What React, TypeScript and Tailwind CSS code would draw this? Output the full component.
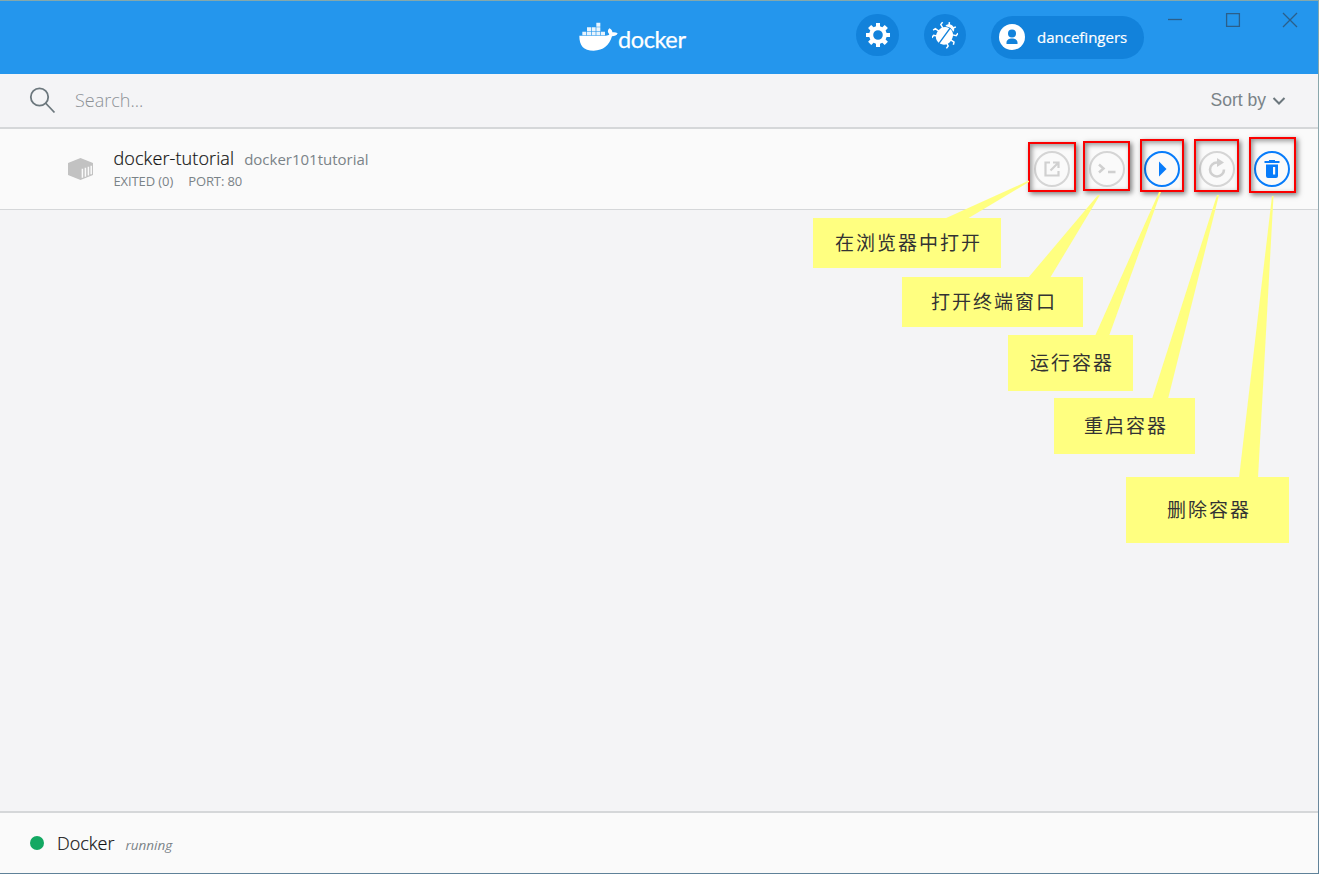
import React from "react";

const FONT = "font-['Open_Sans','Noto_Sans_CJK_SC',sans-serif]";

interface Callout {
  label: string;
  box: string;
  tail: string;
}

const callouts: Callout[] = [
  { label: "在浏览器中打开", box: "left-[813px] top-[218px] w-[188px] h-[50px] pl-[22px]", tail: "944,219 967,219 1029,182 1029,180.5" },
  { label: "打开终端窗口", box: "left-[902px] top-[277px] w-[181px] h-[50px] pl-[29px]", tail: "1028,278 1050,278 1100,195 1098,195" },
  { label: "运行容器", box: "left-[1008px] top-[335px] w-[125px] h-[56px] pl-[22px]", tail: "1095,336 1109,336 1161,192 1159,192" },
  { label: "重启容器", box: "left-[1054px] top-[398px] w-[141px] h-[56px] pl-[30px]", tail: "1152,399 1168,399 1219,195 1217,195" },
  { label: "删除容器", box: "left-[1126px] top-[477px] w-[163px] h-[66px] pl-[41px]", tail: "1239,478 1258,478 1273.5,196 1272,196" },
];

const frames = [
  "left-[1028px] top-[142px] w-[48px] h-[50px]",
  "left-[1083px] top-[141px] w-[47px] h-[50px]",
  "left-[1140px] top-[139px] w-[44px] h-[53px]",
  "left-[1194px] top-[139px] w-[45px] h-[53px]",
  "left-[1249px] top-[137px] w-[47px] h-[56px]",
];

function Whale() {
  return (
    <svg width="39" height="29" viewBox="56 67 117 87" fill="white">
      <g opacity=".9">
        <path d="M66 96h12v11H66zM80 96h12v11H80zM94 96h12v11H94zM108 96h12v11h-12zM122 96h12v11h-12z" />
        <path d="M80 82.5h12v12H80zM94 82.5h12v12H94zM108 82.5h12v12h-12zM108 69h12v12h-12z" />
      </g>
      <path d="M57 108H136c6 0 9-1 11-4-6-6-6-12 0-18 6 3 9 7 9 12 6-1 12 0 16 3-3 7-9 9-17 9-8 27-26 43-55 43-31 0-43-16-43-45z" />
    </svg>
  );
}

function Gear() {
  return (
    <svg width="24" height="24" viewBox="0 0 24 24" fill="white">
      <path
        fillRule="evenodd"
        d="M10 0h4v3.2l2.3 1 2.4-2.3 3.2 3.2-2.3 2.4 1 2.5H24v4h-3.4l-1 2.4 2.3 2.4-3.2 3.2-2.4-2.3-2.3 1V24h-4v-3.3l-2.4-1-2.4 2.3-3.1-3.2 2.2-2.4-1-2.4H0v-4h3.3l1-2.5-2.2-2.4 3.1-3.2 2.4 2.3 2.4-1zM12 7.2a4.8 4.8 0 1 0 0 9.6 4.8 4.8 0 0 0 0-9.6z"
      />
    </svg>
  );
}

function Bug() {
  return (
    <svg width="26" height="28" viewBox="0 0 26 28" fill="none" stroke="white" strokeWidth="1.5">
      <g transform="rotate(36 13 14)">
        <path d="M12.4 6v18C7.5 23.5 5 19.5 5 15s2.5-8.5 7.4-9zM13.8 6v18c4.9-.5 7.4-4.5 7.4-9s-2.5-8.5-7.4-9z" fill="white" stroke="none" />
        <path d="M8 6.5a5 4.5 0 0 1 10 0l-5-1.5z" fill="white" stroke="none" />
        <path d="M10.5 3.5 9 1M15.5 3.5 17 1M7 9.5 3.5 8V5M6 14.5H1.5L.5 17M7 19.5 4 21v3M19 9.5 22.5 8V5M20 14.5h4.5l1 2.5M19 19.5l3 1.5v3" />
      </g>
    </svg>
  );
}

function Container() {
  return (
    <svg width="26" height="24" viewBox="0 0 26 24">
      <path d="M12.5 1 25 6v12l-12.5 5L0 18V6z" fill="#c2c2c2" />
      <path d="M14.4 11.8v9M17.4 10.8v9M20.4 9.7v8.8M23.2 8.8v8.5" stroke="#fafafa" strokeWidth="1.5" />
    </svg>
  );
}

interface ActionProps {
  title: string;
  active?: boolean;
  children: React.ReactNode;
}

function Action({ title, active, children }: ActionProps) {
  return (
    <button
      aria-label={title}
      className={`flex h-9 w-9 items-center justify-center rounded-full border-2 ${active ? "border-[#087cfa] text-[#087cfa]" : "border-[#d5d5d5] text-[#d0d0d0]"}`}
    >
      {children}
    </button>
  );
}

function Header() {
  return (
    <header className="flex h-[73px] shrink-0 items-start bg-[#2496ed]">
      <div className="flex flex-1 items-start pl-[579px] pt-[21px]">
        <Whale />
        <span className="-mt-0.5 font-['Lato',sans-serif] text-[23.5px] leading-[38px] tracking-[-0.4px] text-white [-webkit-text-stroke:0.25px_white]">docker</span>
      </div>
      <button aria-label="settings" className="mt-[13px] flex h-[42px] w-[43px] items-center justify-center rounded-full bg-[#1282db]">
        <Gear />
      </button>
      <button aria-label="troubleshoot" className="ml-[25px] mt-[13px] flex h-[42px] w-[42px] items-center justify-center rounded-full bg-[#1282db]">
        <Bug />
      </button>
      <button className="ml-[25px] mt-[15px] flex h-[43px] w-[153px] items-center rounded-full bg-[#1282db] pl-2 text-[15px] text-white">
        <svg width="26" height="26" viewBox="0 0 26 26" className="-mt-0.5 mr-3">
          <circle cx="13" cy="13" r="13" fill="white" />
          <circle cx="13" cy="9.5" r="4" fill="#1282db" />
          <path d="M7.5 20v-1.5c0-2.5 2.5-4 5.5-4s5.5 1.5 5.5 4V20z" fill="#1282db" />
        </svg>
        <span className="[-webkit-text-stroke:0.2px_white]">dancefingers</span>
      </button>
      <svg width="130" height="16" viewBox="0 0 130 16" className="ml-6 mr-[20px] mt-[11px]" fill="none" stroke="#2b5f8a" strokeWidth="1.3">
        <path d="M0 7.5h14" />
        <path d="M58.6 1.6h12.8v12.8H58.6z" />
        <path d="m115 1 14 14M129 1l-14 14" />
      </svg>
    </header>
  );
}

function App() {
  return (
    <div className={`relative h-[874px] w-[1319px] overflow-hidden bg-linear-to-b from-[#84a8ab] via-[#9da4b0] to-[#5f8299] py-px pr-px ${FONT}`}>
      <div className="flex h-full flex-col bg-[#f4f4f6]">
        <Header />
        <div className="flex h-[55px] shrink-0 items-center border-b-2 border-[#d5d7d9] pl-[29px] pr-8">
          <svg width="27" height="27" viewBox="0 0 27 27" fill="none" stroke="#6c777d" strokeWidth="1.8">
            <circle cx="10.5" cy="10" r="8.7" />
            <path d="m16.5 16 9 9.5" />
          </svg>
          <span className="ml-[19px] flex-1 text-[18px] font-light text-[#8d9296]">Search...</span>
          <button className="flex items-center font-['Liberation_Sans',sans-serif] text-[17.5px] text-[#7a8388]">
            Sort by
            <svg width="14" height="10" viewBox="0 0 14 10" className="ml-1.5" fill="none" stroke="#6c777d" strokeWidth="2">
              <path d="M1.5 2 7 7.5 12.5 2" />
            </svg>
          </button>
        </div>
        <div className="flex h-[81px] shrink-0 items-center border-b border-[#d5d7d9] bg-[#fafafa] pb-px pl-[68px] pr-[28px]">
          <Container />
          <div className="ml-[19.5px] flex-1 pt-px">
            <div className="flex items-baseline leading-6">
              <span className="text-[18px] font-light tracking-[0.1px] text-[#111] [-webkit-text-stroke:0.2px_#111]">docker-tutorial</span>
              <span className="ml-2.5 text-[15px] text-[#7a8388]">docker101tutorial</span>
            </div>
            <div className="flex gap-[15px] text-[13px] leading-[21px] text-[#7a8388]">
              <span className="tracking-[-0.1px]">EXITED (0)</span>
              <span className="tracking-[-0.1px]">PORT: 80</span>
            </div>
          </div>
          <div className="flex gap-[19px]">
            <Action title="open in browser">
              <svg width="16" height="16" viewBox="0 0 16 16" fill="none" stroke="currentColor" strokeWidth="2.2">
                <path d="M6 1.5H1.5v13h13V10M9 1.5h5.5V7M14 2 6.5 9.5" />
              </svg>
            </Action>
            <Action title="cli">
              <svg width="18" height="12" viewBox="0 0 18 12" fill="none" stroke="currentColor" strokeWidth="2.5">
                <path d="m1 1.5 4.5 4L1 9.5M10 9h7.5" />
              </svg>
            </Action>
            <Action title="start" active>
              <svg width="10" height="16" viewBox="0 0 10 16" fill="currentColor">
                <path d="M2 .5 9.5 8 2 15.5z" />
              </svg>
            </Action>
            <Action title="restart">
              <svg width="18" height="20" viewBox="0 0 18 20" className="-mt-0.5" fill="none" stroke="currentColor" strokeWidth="2.6">
                <path d="M10 4.5H9a7 7 0 1 0 7 7" />
                <path d="M9 0v9l7-4.5z" fill="currentColor" stroke="none" />
              </svg>
            </Action>
            <Action title="delete" active>
              <svg width="16" height="18" viewBox="0 0 16 18" fill="currentColor">
                <path d="M5 0h6v1h4.5v2H.5V1H5z" />
                <path fillRule="evenodd" d="M2 4.5h12V16q0 2-2 2H4q-2 0-2-2zM9 7v7.5h2.200V7z" />
              </svg>
            </Action>
          </div>
        </div>
        <main className="flex-1" />
        <footer className="flex h-[62px] shrink-0 items-center border-t-2 border-[#d5d7d9] bg-[#fafafa] pl-[30px]">
          <span className="h-3.5 w-3.5 rounded-full bg-[#13a862]" />
          <div className="ml-[13px] flex items-baseline">
            <span className="text-[18px] font-light text-[#111] [-webkit-text-stroke:0.2px_#111]">Docker</span>
            <span className="ml-[11px] text-[13.5px] italic text-[#7a8388]">running</span>
          </div>
        </footer>
      </div>

      {frames.map((frame) => (
        <div key={frame} className={`absolute border-2 border-[#fa0000] shadow-[2px_2px_5px_rgba(0,0,0,0.5),inset_2px_2px_5px_rgba(0,0,0,0.4)] ${frame}`} />
      ))}
      <svg className="absolute left-0 top-0" width="1319" height="600" fill="#ffff80">
        {callouts.map((c) => (
          <polygon key={c.label} points={c.tail} />
        ))}
      </svg>
      {callouts.map((c) => (
        <div key={c.label} className={`absolute flex items-center whitespace-nowrap bg-[#ffff80] text-[19px] tracking-[2px] text-[#333] ${c.box}`}>
          {c.label}
        </div>
      ))}
    </div>
  );
}

export default App;
